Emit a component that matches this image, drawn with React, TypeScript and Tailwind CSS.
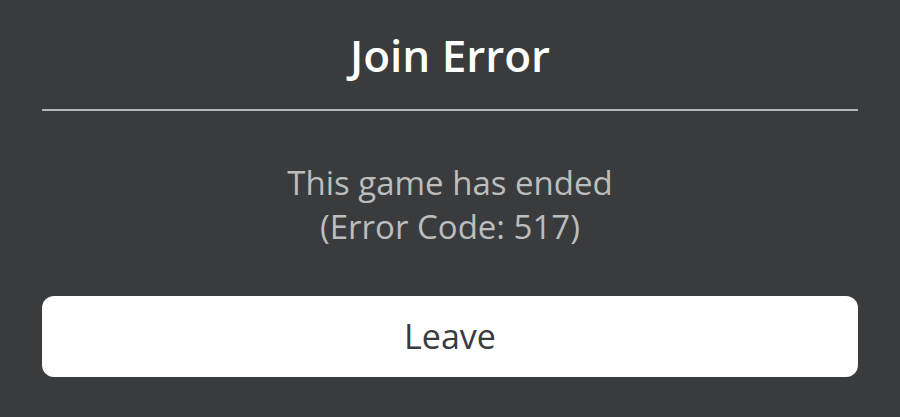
export default function App() {
  return (
    <div className="w-[900px] h-[417px] bg-[#393b3d] px-[42px] flex flex-col font-['Open_Sans',sans-serif]">
      <div className="h-[109px] flex items-center justify-center">
        <h1 className="text-[44px] font-semibold text-white leading-none">Join Error</h1>
      </div>
      <div className="h-[2px] bg-[#b4b5b6]" />
      <div className="mt-[50px] text-center text-[33px] leading-[44px] text-[#bcbdbe]">
        <p>This game has ended</p>
        <p>(Error Code: 517)</p>
      </div>
      <button className="mt-[47px] h-[81px] w-full rounded-[12px] bg-white text-[34px] text-[#393b3d]">
        Leave
      </button>
    </div>
  );
}
